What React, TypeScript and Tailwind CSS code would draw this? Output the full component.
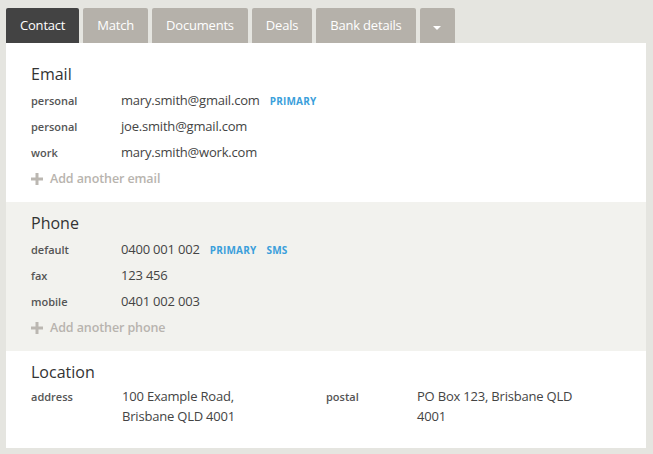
type Row = { label: string; value: string; tags?: string[] };

const emails: Row[] = [
  { label: "personal", value: "mary.smith@gmail.com", tags: ["PRIMARY"] },
  { label: "personal", value: "joe.smith@gmail.com" },
  { label: "work", value: "mary.smith@work.com" },
];

const phones: Row[] = [
  { label: "default", value: "0400 001 002", tags: ["PRIMARY", "SMS"] },
  { label: "fax", value: "123 456" },
  { label: "mobile", value: "0401 002 003" },
];

const tabs = ["Match", "Documents", "Deals", "Bank details"];

function PlusIcon() {
  return (
    <svg width="12" height="12" viewBox="0 0 12 12" className="mr-[7px] shrink-0">
      <rect x="4.5" y="0" width="3" height="12" fill="#bbb7b1" />
      <rect x="0" y="4.5" width="12" height="3" fill="#bbb7b1" />
    </svg>
  );
}

function Section({ title, rows, add }: { title: string; rows: Row[]; add: string }) {
  return (
    <>
      <h2 className="text-[16px] leading-[22px] text-[#333] mb-[3px]">{title}</h2>
      {rows.map((r, i) => (
        <div key={i} className="flex items-center h-[26px]">
          <span className="w-[90px] text-[11px] font-semibold text-[#555]">{r.label}</span>
          <span className="text-[13px] tracking-[-0.2px] text-[#444]">{r.value}</span>
          {r.tags?.map((t) => (
            <span key={t} className="ml-[10px] text-[10px] font-bold tracking-[0.2px] text-[#3b9fdb]">
              {t}
            </span>
          ))}
        </div>
      ))}
      <div className="flex items-center h-[26px] text-[12.5px] font-semibold tracking-[-0.1px] text-[#b8b4ae]">
        <PlusIcon />
        {add}
      </div>
    </>
  );
}

export default function App() {
  return (
    <div
      className="min-h-[454px] bg-[#e5e5e0] pt-[8px] pl-[6px]"
      style={{ fontFamily: '"Open Sans", Lato, sans-serif' }}
    >
      <div className="flex gap-[4px] h-[35px]">
        <div className="flex items-center px-[14px] rounded-t-[2px] bg-[#434343] text-white text-[13px] tracking-[-0.2px]">
          Contact
        </div>
        {tabs.map((t) => (
          <div
            key={t}
            className="flex items-center px-[14px] rounded-t-[2px] bg-[#b5b1aa] text-white text-[13px] tracking-[-0.2px]"
          >
            {t}
          </div>
        ))}
        <div className="flex items-center justify-center w-[35px] rounded-t-[2px] bg-[#b5b1aa]">
          <span className="mt-[4px] border-x-[4px] border-x-transparent border-t-[4px] border-t-white" />
        </div>
      </div>
      <div className="w-[640px] bg-white">
        <div className="pl-[25px] pt-[20px] pb-[10px]">
          <Section title="Email" rows={emails} add="Add another email" />
        </div>
        <div className="pl-[25px] pt-[10px] pb-[10px] bg-[#f2f2ee]">
          <Section title="Phone" rows={phones} add="Add another phone" />
        </div>
        <div className="pl-[25px] pt-[10px] pb-[22px]">
          <h2 className="text-[16px] leading-[22px] text-[#333] mb-[3px]">Location</h2>
          <div className="flex">
            <div className="flex w-[295px]">
              <span className="w-[91px] text-[11px] font-semibold text-[#555] leading-[20px] pt-[1px]">address</span>
              <span className="w-[162px] text-[13px] tracking-[-0.2px] leading-[20px] text-[#444]">
                100 Example Road, Brisbane QLD 4001
              </span>
            </div>
            <div className="flex">
              <span className="w-[91px] text-[11px] font-semibold text-[#555] leading-[20px] pt-[1px]">postal</span>
              <span className="w-[162px] text-[13px] tracking-[-0.2px] leading-[20px] text-[#444]">
                PO Box 123, Brisbane QLD 4001
              </span>
            </div>
          </div>
        </div>
      </div>
    </div>
  );
}
